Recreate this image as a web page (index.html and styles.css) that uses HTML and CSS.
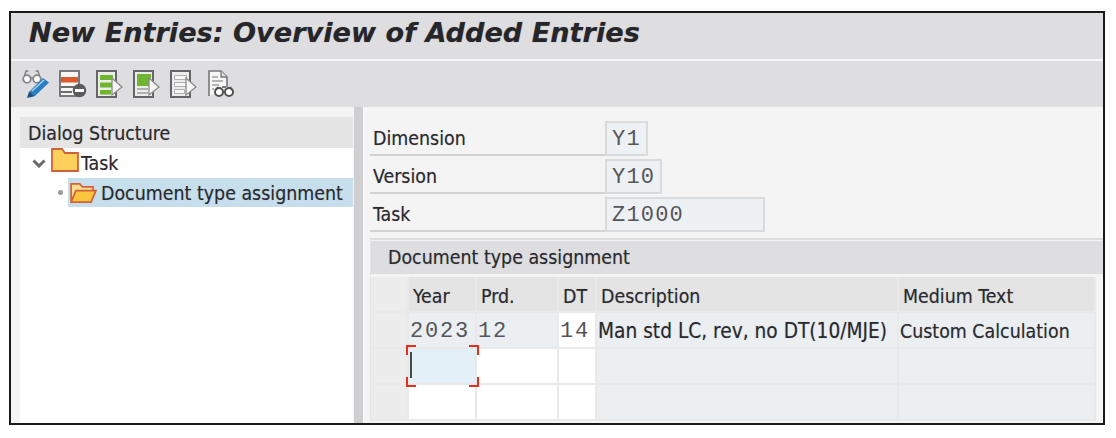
FILE: index.html
```html
<!DOCTYPE html>
<html lang="en">
<head>
    <meta charset="UTF-8">
    <title>New Entries: Overview of Added Entries</title>
    <link rel="stylesheet" href="styles.css">
</head>
<body>
    <div class="frame">
        <div class="title-bar"><h1>New Entries: Overview of Added Entries</h1></div>

        <div class="toolbar">
            <svg class="icon icon-wide" viewBox="0 0 28 28">
                <circle cx="5" cy="9" r="3.800" fill="#fff" stroke="#858585" stroke-width="1.800"/>
                <circle cx="15" cy="9" r="3.800" fill="#fff" stroke="#858585" stroke-width="1.800"/>
                <path d="M8.500 8h3M2.500 6l1.500-5h2.500M17.500 6l-1.500-5h-2.500" fill="none" stroke="#858585" stroke-width="1.500"/>
                <path d="M7 22L21 8l6 4.500L13 26l-5 1.500z" fill="#2a7fc0"/>
                <path d="M10 21L22 10" stroke="#a6d4ef" stroke-width="1.500"/>
                <path d="M5 28l2-6.500 5 4.500z" fill="#1b4f7c"/>
            </svg>
            <svg class="icon" viewBox="0 0 28 28">
                <rect x="1" y="1" width="19" height="25" fill="#f6f6f6" stroke="#6d6d6d" stroke-width="1.800"/>
                <rect x="2" y="7" width="17" height="5.500" fill="#dc5a2b"/>
                <path d="M2 17h14M2 22h11" stroke="#6d6d6d" stroke-width="1.800"/>
                <circle cx="20.500" cy="20.500" r="6.800" fill="#5a5a5a"/>
                <rect x="16" y="19" width="9" height="3" fill="#fff"/>
            </svg>
            <svg class="icon" viewBox="0 0 28 28">
                <rect x="1" y="1" width="19" height="26" fill="#ececec" stroke="#666" stroke-width="2"/>
                <path d="M4 5h13v5H4zM4 12.500h13v5H4zM4 20h11v4.500H4z" fill="#6fb52f"/>
                <path d="M16 8l10 9-10 8z" fill="#f6f6f6" stroke="#8b8b8b" stroke-width="1.300"/>
            </svg>
            <svg class="icon" viewBox="0 0 28 28">
                <rect x="1" y="1" width="19" height="26" fill="#ececec" stroke="#666" stroke-width="2"/>
                <rect x="4" y="4" width="14" height="12" fill="#6fb52f"/>
                <path d="M4 19h11M4 23h11" stroke="#b0b0b0" stroke-width="1.800"/>
                <path d="M16 8l10 9-10 8z" fill="#f6f6f6" stroke="#8b8b8b" stroke-width="1.300"/>
            </svg>
            <svg class="icon" viewBox="0 0 28 28">
                <rect x="1" y="1" width="19" height="26" fill="#ececec" stroke="#666" stroke-width="2"/>
                <path d="M4.500 5.500h12v4h-12zM4.500 12.500h12v4h-12zM4.500 19.500h10v4h-10z" fill="#f6f6f6" stroke="#b0b0b0"/>
                <path d="M16 8l10 9-10 8z" fill="#f6f6f6" stroke="#8b8b8b" stroke-width="1.300"/>
            </svg>
            <svg class="icon" viewBox="0 0 28 28">
                <path d="M2 26V1h12l6 6v10" fill="#f6f6f6" stroke="#777" stroke-width="1.600"/>
                <path d="M14 1v6h6" fill="#dcdcdc" stroke="#777" stroke-width="1.300"/>
                <path d="M5 7h6M5 11h11M5 15h7M5 19h2" stroke="#a0a0a0" stroke-width="1.500"/>
                <circle cx="12" cy="22" r="4" fill="#fff" stroke="#505050" stroke-width="2"/>
                <circle cx="22" cy="22" r="4" fill="#fff" stroke="#505050" stroke-width="2"/>
                <path d="M15 17h4M9 20l2-3M25 20l-2-3" stroke="#505050" stroke-width="1.600"/>
            </svg>
        </div>

        <div class="main">
            <div class="nav-panel">
                <div class="nav-head">Dialog Structure</div>
                <div class="tree">
                    <div class="tree-row tree-root">
                        <svg class="chevron" viewBox="0 0 14 9"><path d="M1.500 1.500L7 7l5.500-5.500" fill="none" stroke="#6a6a6a" stroke-width="3"/></svg>
                        <svg class="folder" viewBox="0 0 28 26">
                            <path d="M1 24V2h10l3 4h13v18z" fill="#fbd15b" stroke="#d2603a" stroke-width="1.800"/>
                        </svg>
                        <span>Task</span>
                    </div>
                    <div class="tree-row tree-child">
                        <span class="bullet"></span>
                        <div class="tree-selected">
                            <svg class="folder" viewBox="0 0 28 22">
                                <path d="M1 20V2h9l3 3h11v4" fill="#f7dd92" stroke="#d2603a" stroke-width="1.800"/>
                                <path d="M1 21l5-12h21l-5 12z" fill="#fbc53d" stroke="#d2603a" stroke-width="1.800"/>
                            </svg>
                            <span>Document type assignment</span>
                        </div>
                    </div>
                </div>
            </div>

            <div class="splitter"></div>

            <div class="content">
                <div class="fields">
                    <div class="field-row">
                        <label>Dimension</label>
                        <div class="field field-s">Y1</div>
                    </div>
                    <div class="field-row">
                        <label>Version</label>
                        <div class="field field-m">Y10</div>
                    </div>
                    <div class="field-row">
                        <label>Task</label>
                        <div class="field field-l">Z1000</div>
                    </div>
                </div>

                <div class="section">
                    <div class="section-head">Document type assignment</div>
                    <div class="grid">
                        <div class="cell head sel"></div>
                        <div class="cell head">Year</div>
                        <div class="cell head">Prd.</div>
                        <div class="cell head">DT</div>
                        <div class="cell head">Description</div>
                        <div class="cell head">Medium Text</div>

                        <div class="cell sel"></div>
                        <div class="cell ro mono">2023</div>
                        <div class="cell ro mono">12</div>
                        <div class="cell input mono dt">14</div>
                        <div class="cell ro desc">Man std LC, rev, no DT(10/MJE)</div>
                        <div class="cell ro">Custom Calculation</div>

                        <div class="cell sel"></div>
                        <div class="cell focus">
                            <span class="caret"></span>
                            <i class="tick tl"></i><i class="tick tr"></i><i class="tick bl"></i><i class="tick br"></i>
                        </div>
                        <div class="cell input"></div>
                        <div class="cell input"></div>
                        <div class="cell ro"></div>
                        <div class="cell ro"></div>

                        <div class="cell sel"></div>
                        <div class="cell input"></div>
                        <div class="cell input"></div>
                        <div class="cell input"></div>
                        <div class="cell ro"></div>
                        <div class="cell ro"></div>
                    </div>
                </div>
            </div>
        </div>
    </div>
</body>
</html>
```

FILE: styles.css
```css
body {
    margin: 0;
    background: #fff;
    font-family: "DejaVu Sans Condensed", "DejaVu Sans", sans-serif;
    color: #2a2a2e;
    text-shadow: 0 0 1px rgba(40, 40, 50, 0.35);
}
.frame {
    box-sizing: border-box;
    width: 1096px;
    height: 414px;
    margin: 11px 0 0 9px;
    border: 2px solid #1a1a1a;
    display: flex;
    flex-direction: column;
    overflow: hidden;
}
.title-bar {
    height: 46px;
    flex: none;
    box-sizing: content-box;
    background: #dedee0;
    border-bottom: 2px solid #f6f6f6;
    display: flex;
    align-items: flex-start;
    padding-left: 18px;
}
h1 {
    margin: 4px 0 0;
    font-family: "DejaVu Sans", sans-serif;
    font-size: 27.150px;
    font-weight: bold;
    font-style: italic;
    color: #26262a;
}
.toolbar {
    height: 46px;
    flex: none;
    background: #dedee0;
    display: flex;
    align-items: center;
    gap: 9px;
    padding-left: 11px;
}
.icon {
    width: 28px;
    height: 28px;
    flex: none;
}
.main {
    flex: 1;
    display: flex;
    min-height: 0;
    background: #f4f4f4;
}
.nav-panel {
    width: 333px;
    flex: none;
    padding: 10px 1px 0 9px;
    display: flex;
    flex-direction: column;
}
.nav-head {
    height: 31px;
    flex: none;
    box-sizing: border-box;
    padding: 5px 0 0 8px;
    background: #e5e5e6;
    font-size: 19.400px;
}
.tree {
    flex: 1;
    background: #fff;
    font-size: 19.400px;
}
.tree-row {
    display: flex;
    align-items: center;
}
.tree-root {
    height: 30px;
    padding-left: 12px;
}
.chevron {
    width: 14px;
    height: 9px;
    margin-right: 5px;
}
.tree-root .folder {
    width: 28px;
    height: 26px;
    margin: -6px 2px 0 0;
}
.tree-child {
    height: 29px;
    padding-left: 38px;
}
.bullet {
    width: 5px;
    height: 5px;
    background: #9a9a9a;
    border-radius: 50%;
    margin-right: 5px;
}
.tree-selected {
    flex: 1;
    height: 29px;
    background: #c7dfec;
    display: flex;
    align-items: center;
    padding-left: 2px;
}
.tree-selected span {
    padding-top: 2px;
}
.tree-selected .folder {
    width: 27px;
    height: 21px;
    margin-right: 4px;
}
.splitter {
    width: 9px;
    flex: none;
    background: #cfcfd1;
    border-right: 1px solid #fafafa;
}
.content {
    flex: 1;
    min-width: 0;
    padding-top: 14px;
    padding-left: 6px;
}
.fields {
    display: flex;
    flex-direction: column;
    gap: 3px;
    margin-bottom: 6px;
}
.field-row {
    display: flex;
    height: 35px;
}
.field-row label {
    width: 235px;
    box-sizing: border-box;
    flex: none;
    padding: 6px 0 0 3px;
    border-bottom: 2px solid #d2d2d4;
    font-size: 19.400px;
}
.field {
    box-sizing: border-box;
    border: 2px solid #d8dadc;
    background: #edf1f4;
    font-family: "Liberation Mono", monospace;
    font-size: 22px;
    letter-spacing: 1.200px;
    padding: 4px 0 0 5px;
    color: #55555a;
    text-shadow: none;
}
.field-s { width: 43px; }
.field-m { width: 57px; }
.field-l { width: 160px; }
.section {
    border-top: 2px solid #dcdcdc;
    border-left: 1px solid #e4e4e4;
    padding-top: 1px;
}
.section-head {
    height: 33px;
    box-sizing: border-box;
    background: #dedee0;
    padding: 5px 0 0 17px;
    font-size: 19.400px;
    margin-bottom: 3px;
}
.grid {
    display: grid;
    grid-template-columns: 38px 68px 82px 38px 302px 197px;
    grid-template-rows: 36px 36px 36px 36px;
    font-size: 19.400px;
}
.cell {
    box-sizing: border-box;
    border-right: 2px solid #e9e9ea;
    border-bottom: 2px solid #e9e9ea;
    padding: 7px 0 0 1px;
    white-space: nowrap;
    min-width: 0;
}
.head {
    background: #e4e4e5;
    padding: 8px 0 0 4px;
}
.sel { background: #ececed; }
.ro { background: #ebeff2; }
.input { background: #fff; }
.cell.desc {
    font-size: 20.700px;
    padding-top: 6px;
}
.cell.mono {
    font-family: "Liberation Mono", monospace;
    font-size: 22px;
    letter-spacing: 1.800px;
    padding-top: 6px;
    color: #55555a;
    text-shadow: none;
}
.dt {
    text-align: right;
    padding-right: 5px;
}
.focus {
    position: relative;
    background: #e3f0f8;
}
.caret {
    display: block;
    width: 2px;
    height: 26px;
    margin: -4px 0 0 0;
    background: #4a4a4a;
}
.tick {
    position: absolute;
    width: 8px;
    height: 8px;
    border: 0 solid #e0301e;
}
.tl { left: -3px; top: -4px; border-width: 2px 0 0 2px; }
.tr { right: -4px; top: -4px; border-width: 2px 2px 0 0; }
.bl { left: -3px; bottom: -4px; border-width: 0 0 2px 2px; }
.br { right: -4px; bottom: -4px; border-width: 0 2px 2px 0; }
```
